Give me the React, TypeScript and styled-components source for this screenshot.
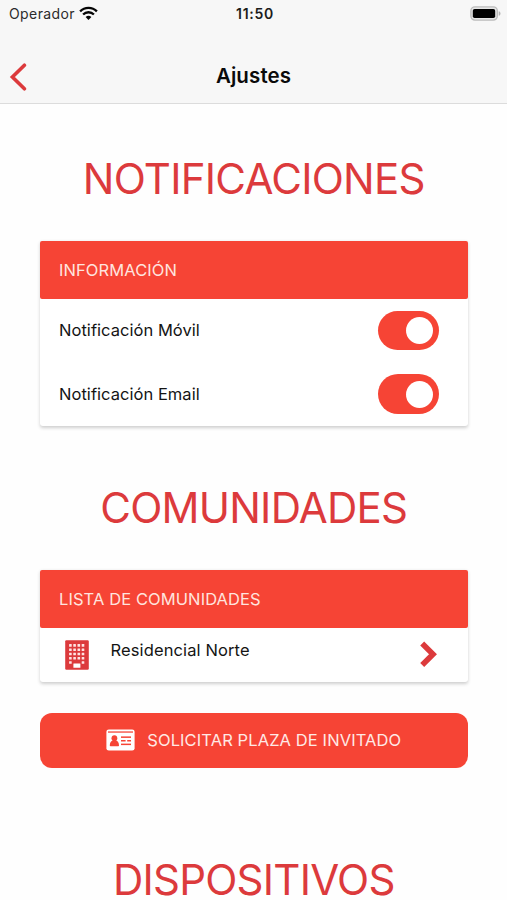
import React from "react";
import styled, { createGlobalStyle } from "styled-components";

const ACCENT = "#f64435";
const CRIMSON = "#dc3a3c";

const GlobalStyle = createGlobalStyle`
  *, *::before, *::after { box-sizing: border-box; }
  body { margin: 0; background: #fefefe; overflow: hidden; }
`;

const Screen = styled.div`
  width: 507px;
  height: 900px;
  overflow: hidden;
  background: #fefefe;
  color: #141414;
  font-family: Inter, "Liberation Sans", sans-serif;
`;

const Header = styled.header`
  height: 104px;
  background: #f7f7f7;
  border-bottom: 1px solid #dcdcdc;
`;

const StatusBar = styled.div`
  display: grid;
  grid-template-columns: 1fr auto 1fr;
  align-items: center;
  height: 27px;
  padding: 0 6px 0 9px;
`;

const Carrier = styled.div`
  display: flex;
  align-items: center;
  gap: 4px;
  font-size: 14px;
  letter-spacing: 0.4px;
  color: #2b2b2b;
`;

const Clock = styled.div`
  font-size: 14px;
  font-weight: 600;
  letter-spacing: 0.7px;
  color: #1c1c1c;
`;

const BatterySlot = styled.div`
  display: flex;
  justify-content: flex-end;
`;

const NavBar = styled.nav`
  display: grid;
  grid-template-columns: 60px 1fr 60px;
  align-items: center;
  height: 76px;
  padding-top: 22px;
`;

const BackButton = styled.button`
  display: flex;
  padding: 1px 0 0 8px;
  border: 0;
  background: none;
`;

const NavTitle = styled.h1`
  margin: 0;
  text-align: center;
  font-size: 20.5px;
  font-weight: 600;
  line-height: 24px;
  letter-spacing: 0.1px;
  color: #0a0a0a;
`;

const Content = styled.main`
  display: flex;
  flex-direction: column;
  padding: 55px 39.5px 0 40px;
`;

const SectionTitle = styled.h2<{ $gap: number }>`
  margin: 0 0 ${(p) => p.$gap}px;
  text-align: center;
  white-space: nowrap;
  font-size: 42px;
  font-weight: 400;
  line-height: 40px;
  letter-spacing: -0.75px;
  color: ${CRIMSON};
`;

const Card = styled.section<{ $gap: number }>`
  margin-bottom: ${(p) => p.$gap}px;
  border-radius: 3px;
  background: #fff;
  box-shadow: 0 1.5px 3.5px rgba(0, 0, 0, 0.19);
`;

const CardHeader = styled.div`
  display: flex;
  align-items: center;
  height: 57.5px;
  padding-left: 19px;
  border-radius: 2px;
  background: ${ACCENT};
  color: #ffe4df;
  font-size: 16.5px;
  letter-spacing: 0.09px;
`;

const SettingRow = styled.label`
  display: flex;
  align-items: center;
  justify-content: space-between;
  height: 63.75px;
  padding: 0 28.5px 0 19px;
  font-size: 16.5px;
  letter-spacing: 0.04px;
`;

const SettingName = styled.span`
  padding-bottom: 1px;
`;

const Switch = styled.span`
  display: flex;
  align-items: center;
  justify-content: flex-end;
  width: 61.5px;
  height: 39.5px;
  padding-right: 6px;
  border-radius: 20px;
  background: ${ACCENT};
`;

const Knob = styled.span`
  width: 27px;
  height: 27px;
  border-radius: 50%;
  background: #fff;
`;

const CommunityRow = styled.div`
  display: grid;
  grid-template-columns: 46px 1fr auto;
  align-items: center;
  height: 54px;
  padding: 0 30px 0 24.5px;
  font-size: 16.5px;
  letter-spacing: 0.12px;
`;

const CommunityName = styled.span`
  padding-bottom: 9px;
`;

const RequestButton = styled.button`
  display: flex;
  align-items: center;
  justify-content: center;
  gap: 12px;
  height: 55px;
  margin: 0 0 92px;
  padding: 0;
  border: 0;
  border-radius: 12px;
  background: ${ACCENT};
  color: #ffe9e5;
  font-family: inherit;
  font-size: 16.5px;
  letter-spacing: 0.1px;
`;

const WifiIcon = () => (
  <svg width="19" height="15" viewBox="0 0 19 15" fill="none" stroke="#050505" strokeWidth="2.3">
    <path d="M1.1 5.4a11.8 11.8 0 0 1 16.8 0" />
    <path d="M4.1 8.5a7.6 7.6 0 0 1 10.8 0" />
    <path d="M9.5 14 6.6 11.1a4.1 4.1 0 0 1 5.8 0Z" fill="#050505" stroke="none" />
  </svg>
);

const BatteryIcon = () => (
  <svg width="31" height="15" viewBox="0 0 31 15">
    <rect x="0.9" y="0.9" width="26.4" height="13.2" rx="4" fill="#e6e6e6" stroke="#bcbcbc" strokeWidth="1.4" />
    <rect x="2.8" y="2.9" width="22.4" height="9.2" rx="1.8" fill="#000" />
    <path d="M28.7 5.2c2.4.7 2.4 3.9 0 4.6Z" fill="#b5b5b5" />
  </svg>
);

const BackIcon = () => (
  <svg width="20" height="28" viewBox="0 0 20 28" fill="none" stroke={CRIMSON} strokeWidth="3.6" strokeLinecap="round">
    <path d="M16.4 2.2 4.400 14l12 11.800" strokeLinejoin="miter" />
  </svg>
);

const WINDOW_ROWS = [4.1, 8.4, 12.7, 17, 21.2];
const WINDOW_COLUMNS = [4.1, 8.3, 12.5, 16.7];

const BuildingIcon = () => (
  <svg width="24" height="30" viewBox="0 0 24 30">
    <rect x="0.2" y="0.2" width="23.6" height="29.6" rx="1.2" fill={CRIMSON} />
    <g fill="#ffe3e3">
      {WINDOW_ROWS.map((y, row) =>
        WINDOW_COLUMNS.filter((_, column) => row < 4 || column === 0 || column === 3).map((x) => (
          <rect key={`${x}-${y}`} x={x} y={y} width="2.6" height="2.6" rx="0.3" />
        )),
      )}
    </g>
    <rect x="8.4" y="23.4" width="7" height="4.4" rx="0.4" fill="#fff" />
  </svg>
);

const ForwardIcon = () => (
  <svg width="18" height="28" viewBox="0 0 18 28" fill="none" stroke={CRIMSON} strokeWidth="5.6">
    <path d="M2.2 2.4 13 13.2 2.2 24" />
  </svg>
);

const IdCardIcon = () => (
  <svg width="29" height="22" viewBox="0 0 29 22">
    <rect x="0.4" y="0.4" width="28.2" height="21.2" rx="2.4" fill="#fff" />
    <g fill={ACCENT}>
      <rect x="2" y="2.3" width="25" height="1.5" opacity="0.85" />
      <circle cx="8.4" cy="9.2" r="2.9" />
      <path d="M3.8 16.6c0-3.2 1.4-5 3-5.200 1 .7 2.200.7 3.200 0 1.600.2 3 2 3 5.200q0 .7-.7.7H4.500q-.7 0-.7-.7Z" />
      <rect x="15" y="7.4" width="10" height="1.5" />
      <rect x="15" y="11" width="4.600" height="1.5" />
      <rect x="21.200" y="11" width="3.800" height="1.5" />
      <rect x="15" y="14.6" width="10" height="1.5" />
    </g>
  </svg>
);

export default function App() {
  return (
    <Screen>
      <GlobalStyle />
      <Header>
        <StatusBar>
          <Carrier>
            Operador
            <WifiIcon />
          </Carrier>
          <Clock>11:50</Clock>
          <BatterySlot>
            <BatteryIcon />
          </BatterySlot>
        </StatusBar>
        <NavBar>
          <BackButton aria-label="Atrás">
            <BackIcon />
          </BackButton>
          <NavTitle>Ajustes</NavTitle>
        </NavBar>
      </Header>
      <Content>
        <SectionTitle $gap={42}>NOTIFICACIONES</SectionTitle>
        <Card $gap={62}>
          <CardHeader>INFORMACIÓN</CardHeader>
          <SettingRow>
            <SettingName>Notificación Móvil</SettingName>
            <Switch role="switch" aria-checked="true">
              <Knob />
            </Switch>
          </SettingRow>
          <SettingRow>
            <SettingName>Notificación Email</SettingName>
            <Switch role="switch" aria-checked="true">
              <Knob />
            </Switch>
          </SettingRow>
        </Card>
        <SectionTitle $gap={42}>COMUNIDADES</SectionTitle>
        <Card $gap={31}>
          <CardHeader>LISTA DE COMUNIDADES</CardHeader>
          <CommunityRow>
            <BuildingIcon />
            <CommunityName>Residencial Norte</CommunityName>
            <ForwardIcon />
          </CommunityRow>
        </Card>
        <RequestButton>
          <IdCardIcon />
          SOLICITAR PLAZA DE INVITADO
        </RequestButton>
        <SectionTitle $gap={0}>DISPOSITIVOS</SectionTitle>
      </Content>
    </Screen>
  );
}
